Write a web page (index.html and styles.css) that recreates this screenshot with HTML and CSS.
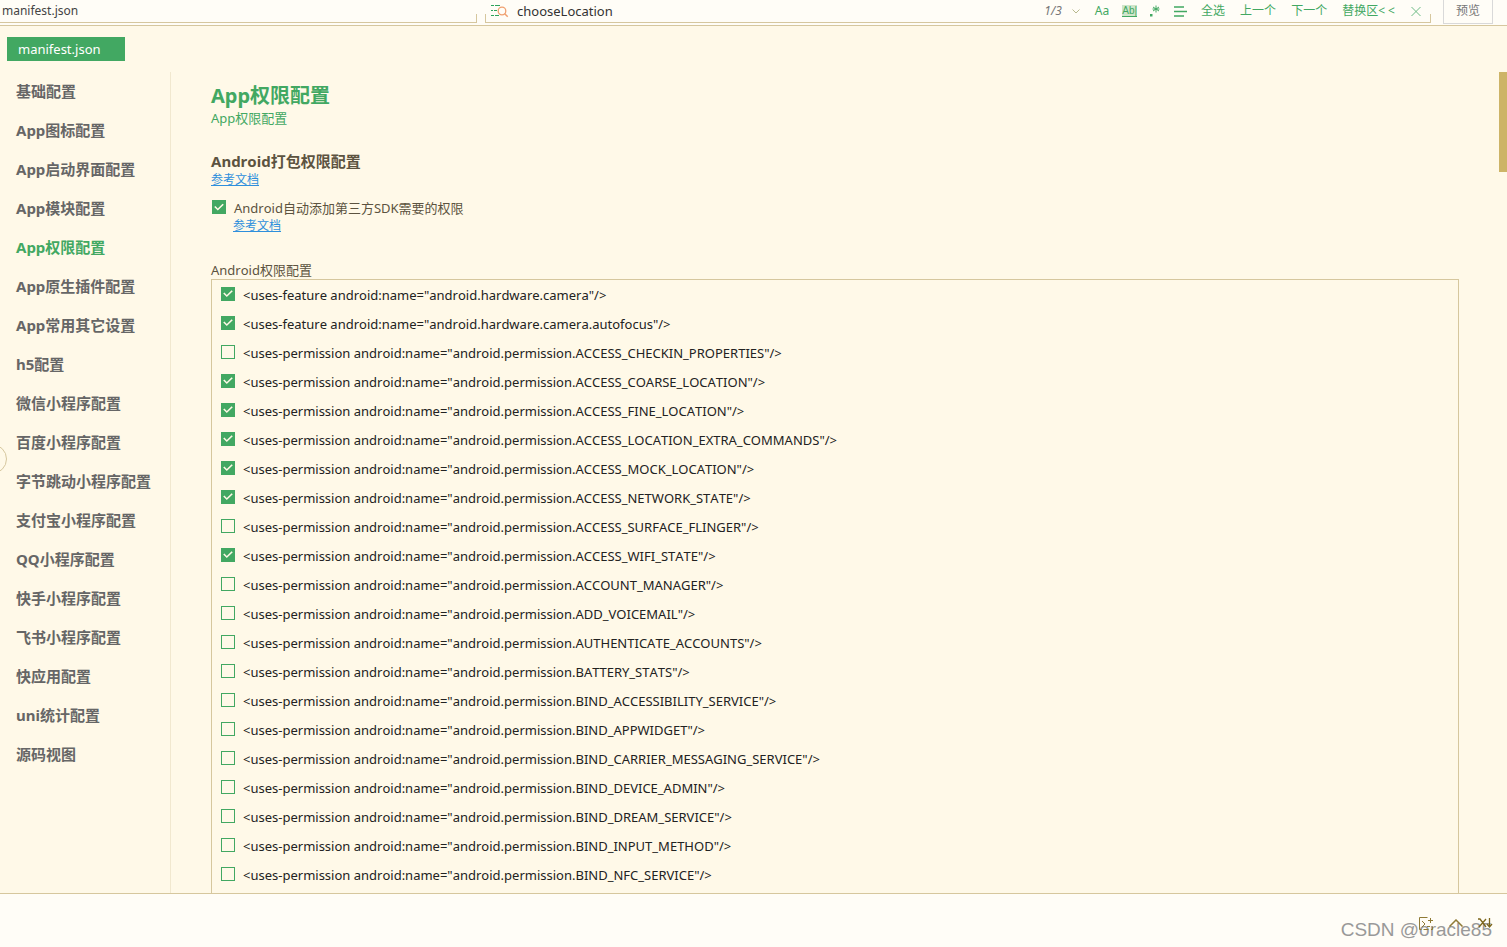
FILE: index.html
```html
<!DOCTYPE html>
<html lang="zh-CN">
<head>
<meta charset="utf-8">
<title>manifest.json</title>
<link rel="stylesheet" href="styles.css">
</head>
<body>
<header class="topbar">
  <input class="file-field" type="text" value="manifest.json" aria-label="文件">
  <div class="search">
    <svg class="search-icon" width="18" height="14" viewBox="0 0 18 14" fill="none">
      <path d="M0 1.500h3M4 1.500h5M0 6.500h2M3 6.500h3M0 11.500h3M4 11.500h4" stroke="#2fa35c"/>
      <circle cx="11" cy="7" r="3.800" stroke="#f0a070" stroke-width="1.300"/>
      <path d="M13.700 9.700l3 3" stroke="#f0a070" stroke-width="1.500"/>
    </svg>
    <input class="search-field" type="text" value="chooseLocation" aria-label="查找">
    <span class="count">1/3</span>
    <button class="tool tool-history" aria-label="历史"><svg width="8" height="5" viewBox="0 0 8 5" fill="none"><path d="M.5.5L4 4 7.500.5" stroke="#b8b98e"/></svg></button>
    <button class="tool tool-case">Aa</button>
    <button class="tool tool-word"><span class="word-mark">Ab|</span></button>
    <button class="tool tool-regex" aria-label="正则"><svg width="10" height="12" viewBox="0 0 10 12"><path d="M6 .5v7M3 2l6 4M9 2L3 6M2.500 4h7" stroke="#42a862" fill="none"/><path d="M0 9h2.500v2.500H0z" fill="#42a862"/></svg></button>
    <button class="tool tool-lines" aria-label="多行"><svg width="13" height="11" viewBox="0 0 13 11"><path d="M0 1h10M0 5.500h13M0 10h10" stroke="#42a862" stroke-width="1.500"/></svg></button>
    <button class="tool tool-all">全选</button>
    <button class="tool tool-prev">上一个</button>
    <button class="tool tool-next">下一个</button>
    <button class="tool tool-replace">替换区&lt; &lt;</button>
    <button class="tool tool-close" aria-label="关闭"><svg width="10" height="9" viewBox="0 0 10 9"><path d="M.5 0l9 9M9.500 0l-9 9" stroke="#6dbb85"/></svg></button>
  </div>
  <button class="preview">预览</button>
</header>

<div class="tabs"><button class="tab">manifest.json</button></div>

<div class="workspace">
  <nav class="sidebar">
    <a href="#">基础配置</a>
    <a href="#">App图标配置</a>
    <a href="#">App启动界面配置</a>
    <a href="#">App模块配置</a>
    <a href="#" class="active">App权限配置</a>
    <a href="#">App原生插件配置</a>
    <a href="#">App常用其它设置</a>
    <a href="#">h5配置</a>
    <a href="#">微信小程序配置</a>
    <a href="#">百度小程序配置</a>
    <a href="#">字节跳动小程序配置</a>
    <a href="#">支付宝小程序配置</a>
    <a href="#">QQ小程序配置</a>
    <a href="#">快手小程序配置</a>
    <a href="#">飞书小程序配置</a>
    <a href="#">快应用配置</a>
    <a href="#">uni统计配置</a>
    <a href="#">源码视图</a>
  </nav>
  <main class="content">
    <h1>App权限配置</h1>
    <p class="subtitle">App权限配置</p>
    <h2>Android打包权限配置</h2>
    <a class="doc" href="#">参考文档</a>
    <div class="auto">
      <label class="check"><input type="checkbox" checked>Android自动添加第三方SDK需要的权限</label>
      <a class="doc" href="#">参考文档</a>
    </div>
    <h3>Android权限配置</h3>
    <div class="permissions">
      <label><input type="checkbox" checked>&lt;uses-feature android:name="android.hardware.camera"/&gt;</label>
      <label><input type="checkbox" checked>&lt;uses-feature android:name="android.hardware.camera.autofocus"/&gt;</label>
      <label><input type="checkbox">&lt;uses-permission android:name="android.permission.ACCESS_CHECKIN_PROPERTIES"/&gt;</label>
      <label><input type="checkbox" checked>&lt;uses-permission android:name="android.permission.ACCESS_COARSE_LOCATION"/&gt;</label>
      <label><input type="checkbox" checked>&lt;uses-permission android:name="android.permission.ACCESS_FINE_LOCATION"/&gt;</label>
      <label><input type="checkbox" checked>&lt;uses-permission android:name="android.permission.ACCESS_LOCATION_EXTRA_COMMANDS"/&gt;</label>
      <label><input type="checkbox" checked>&lt;uses-permission android:name="android.permission.ACCESS_MOCK_LOCATION"/&gt;</label>
      <label><input type="checkbox" checked>&lt;uses-permission android:name="android.permission.ACCESS_NETWORK_STATE"/&gt;</label>
      <label><input type="checkbox">&lt;uses-permission android:name="android.permission.ACCESS_SURFACE_FLINGER"/&gt;</label>
      <label><input type="checkbox" checked>&lt;uses-permission android:name="android.permission.ACCESS_WIFI_STATE"/&gt;</label>
      <label><input type="checkbox">&lt;uses-permission android:name="android.permission.ACCOUNT_MANAGER"/&gt;</label>
      <label><input type="checkbox">&lt;uses-permission android:name="android.permission.ADD_VOICEMAIL"/&gt;</label>
      <label><input type="checkbox">&lt;uses-permission android:name="android.permission.AUTHENTICATE_ACCOUNTS"/&gt;</label>
      <label><input type="checkbox">&lt;uses-permission android:name="android.permission.BATTERY_STATS"/&gt;</label>
      <label><input type="checkbox">&lt;uses-permission android:name="android.permission.BIND_ACCESSIBILITY_SERVICE"/&gt;</label>
      <label><input type="checkbox">&lt;uses-permission android:name="android.permission.BIND_APPWIDGET"/&gt;</label>
      <label><input type="checkbox">&lt;uses-permission android:name="android.permission.BIND_CARRIER_MESSAGING_SERVICE"/&gt;</label>
      <label><input type="checkbox">&lt;uses-permission android:name="android.permission.BIND_DEVICE_ADMIN"/&gt;</label>
      <label><input type="checkbox">&lt;uses-permission android:name="android.permission.BIND_DREAM_SERVICE"/&gt;</label>
      <label><input type="checkbox">&lt;uses-permission android:name="android.permission.BIND_INPUT_METHOD"/&gt;</label>
      <label><input type="checkbox">&lt;uses-permission android:name="android.permission.BIND_NFC_SERVICE"/&gt;</label>
    </div>
  </main>
  <div class="scrollbar"><div class="thumb"></div></div>
  <span class="handle"></span>
</div>

<footer class="bottombar">
  <span class="watermark">CSDN @oracle85</span>
  <button class="foot" aria-label="终端"><svg width="15" height="13" viewBox="0 0 15 13" fill="none" stroke="#8f7a35"><path d="M8.500.5H.5v12h2M12 12.500h1.500v-3M3 4l3 3-3 3M8 9.500h3M9 3.500h5M11.500 1v5M4.500 12.500h5"/></svg></button>
  <button class="foot" aria-label="展开"><svg width="14" height="8" viewBox="0 0 14 8" fill="none" stroke="#8f7a35" stroke-width="1.500"><path d="M.5 7.500L7 1l6.500 6.500"/></svg></button>
  <button class="foot" aria-label="清除"><svg width="15" height="10" viewBox="0 0 15 10" fill="none" stroke="#7d661c" stroke-width="1.300"><path d="M0 1h2l6 8M8 1L1 9M11.500 0v8.500M9 6l2.500 3L14 6"/></svg></button>
</footer>
</body>
</html>
```
FILE: styles.css
```css
* { box-sizing: border-box; }

body {
  margin: 0;
  height: 100vh;
  display: flex;
  flex-direction: column;
  overflow: hidden;
  background: #fff9e8;
  color: #222;
  font: 13px/20px "Noto Sans", "Noto Sans CJK SC", sans-serif;
  font-kerning: none;
}

button, input { font: inherit; font-kerning: inherit; color: inherit; }
button { padding: 0; border: 0; background: none; cursor: pointer; }
svg { display: block; }

.topbar {
  flex: none;
  display: flex;
  height: 26px;
  background: #fffdf7;
  border-bottom: 1px solid #d6c79e;
}

.file-field, .search {
  height: 23px;
  border: 0;
  border-bottom: 1px solid #d6c79e;
  background: linear-gradient(#d6c79e, #d6c79e) right bottom / 1px 8px no-repeat;
}

.file-field {
  width: 477px;
  margin-right: 8px;
  padding: 0 2px 2px;
  color: #444;
  font-size: 12px;
}

.search {
  flex: 1;
  display: flex;
  align-items: center;
  padding: 0 10px 0 6px;
  background:
    linear-gradient(#d6c79e, #d6c79e) left bottom / 1px 8px no-repeat,
    linear-gradient(#d6c79e, #d6c79e) right bottom / 1px 8px no-repeat;
}

.search-field {
  flex: 1;
  min-width: 0;
  padding: 0 0 0 8px;
  border: 0;
  background: none;
  color: #333;
}

.count { font-size: 12px; font-style: italic; color: #777; }

.tool { color: #42a862; font-size: 12px; white-space: nowrap; }
.tool-history { margin-left: 10px; }
.tool-case { margin-left: 15px; }
.tool-word { margin-left: 13px; }

.word-mark {
  display: block;
  font: 10px/11px "Liberation Sans", Arial, sans-serif;
  background: #cfe6cb;
  border-bottom: 1px solid #42a862;
}

.tool-regex { margin-left: 13px; }
.tool-lines { margin-left: 14px; }
.tool-all { margin-left: 14px; }
.tool-prev { margin-left: 15px; }
.tool-next { margin-left: 15px; }
.tool-replace { margin-left: 15px; }
.tool-close { margin-left: 16px; }

.preview {
  width: 50px;
  height: 24px;
  margin: 0 14px 0 12px;
  padding-bottom: 2px;
  border: 1px solid #d9d9d9;
  border-top: 0;
  color: #777;
  font-size: 12px;
}

.tabs { flex: none; height: 46px; padding: 11px 7px; }

.tab {
  width: 118px;
  height: 24px;
  padding: 0 11px;
  background: #42a862;
  color: #fff;
  text-align: left;
}

.workspace { position: relative; flex: 1; min-height: 0; display: flex; overflow: hidden; }

.sidebar {
  width: 171px;
  flex: none;
  display: flex;
  flex-direction: column;
  border-right: 1px solid #f1e8cf;
}

.sidebar a {
  height: 39px;
  padding-left: 16px;
  line-height: 39px;
  color: #666;
  font-size: 15px;
  font-weight: 700;
  text-decoration: none;
}

.sidebar .active { color: #42a862; }

.content {
  flex: 1;
  min-width: 0;
  display: flex;
  flex-direction: column;
  padding: 11px 40px 0;
  color: #5c5340;
}

h1, h2, h3, p { margin: 0; }
h1 { font-size: 20px; line-height: 26px; color: #42a862; }
.subtitle { line-height: 18px; color: #42a862; }
h2 { margin-top: 23px; font-size: 15px; line-height: 22px; }

.doc { display: block; width: max-content; font-size: 12px; line-height: 16px; color: #2e8fdc; }
.auto { margin: 10px 0 27px; }
.auto .doc { margin-left: 22px; }
h3 { font-size: 13px; font-weight: 400; line-height: 18px; }

label { display: flex; align-items: center; }

input[type="checkbox"] {
  appearance: none;
  flex: none;
  width: 14px;
  height: 14px;
  margin: 0 8px 2px 0;
  border: 1px solid #42a862;
}

input[type="checkbox"]:checked { background: #42a862; }

input[type="checkbox"]:checked::after {
  content: "";
  display: block;
  width: 12px;
  height: 12px;
  background: #fff8e6;
  clip-path: polygon(10% 50%, 20% 42%, 40% 62%, 80% 22%, 90% 32%, 40% 80%);
}

.check { padding-left: 1px; }

.permissions {
  flex: 1 0 auto;
  border: 1px solid #d6c79e;
  border-bottom: 0;
  color: #222;
}

.permissions label { height: 29px; padding-left: 9px; white-space: nowrap; }

.scrollbar { width: 8px; flex: none; }
.thumb { height: 100px; background: #cdb467; }

.handle {
  position: absolute;
  top: 372px;
  left: -23px;
  width: 30px;
  height: 30px;
  border: 1px solid #d6c79e;
  border-radius: 50%;
}

.bottombar {
  position: relative;
  flex: none;
  display: flex;
  justify-content: flex-end;
  align-items: center;
  gap: 15px;
  height: 54px;
  padding: 5px 14px 0 0;
  border-top: 1px solid #d6c79e;
  background: #fffdf7;
}

.foot { position: relative; }

.watermark {
  position: absolute;
  right: 15px;
  bottom: 5px;
  color: #999;
  font: 19px/24px "Liberation Sans", Arial, sans-serif;
}
```
